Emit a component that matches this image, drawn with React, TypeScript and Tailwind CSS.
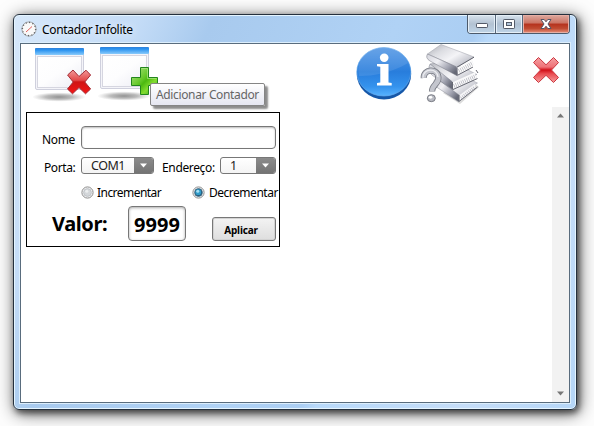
import React from "react";

function BrowserWindow({ x, y, id }: { x: number; y: number; id: string }) {
  return (
    <g>
      <defs>
        <linearGradient id={`${id}bar`} x1="0" y1="0" x2="0" y2="1">
          <stop offset="0" stopColor="#2f80da" />
          <stop offset=".3" stopColor="#2b93f0" />
          <stop offset="1" stopColor="#8acbfb" />
        </linearGradient>
        <linearGradient id={`${id}pane`} x1="0" y1="0" x2="1" y2="1">
          <stop offset="0" stopColor="#fff" />
          <stop offset=".5" stopColor="#fdfdfe" />
          <stop offset="1" stopColor="#ececf4" />
        </linearGradient>
        <radialGradient id={`${id}sh`}>
          <stop offset="0" stopColor="#7f7f7f" stopOpacity=".85" />
          <stop offset=".5" stopColor="#8f8f8f" stopOpacity=".6" />
          <stop offset="1" stopColor="#aaa" stopOpacity="0" />
        </radialGradient>
      </defs>
      <ellipse cx={x + 24} cy={y + 49} rx="27" ry="4.7" fill={`url(#${id}sh)`} />
      <rect x={x + 0.5} y={y + 0.5} width="48" height="41" rx="1.5" fill="#f4f4f9" stroke="#cfd0dd" />
      <rect x={x + 2.5} y={y + 8.5} width="44" height="31" fill={`url(#${id}pane)`} stroke="#d6d6e0" />
      <rect x={x} y={y} width="49" height="7" rx="1" fill={`url(#${id}bar)`} />
    </g>
  );
}

function DeleteWindowIcon() {
  return (
    <svg className="ml-[12px] mt-[2px] h-[58px] w-[60px] shrink-0" viewBox="33 46 60 58">
      <BrowserWindow x={35} y={48} id="del" />
      <defs>
        <linearGradient id="cross" x1="0" y1="0" x2="0" y2="1">
          <stop offset="0" stopColor="#f29a9a" />
          <stop offset=".43" stopColor="#e34a4a" />
          <stop offset=".5" stopColor="#cf1515" />
          <stop offset="1" stopColor="#f21616" />
        </linearGradient>
      </defs>
      <path d="M73 70 79 76.5 86 70.2 90.6 75 84.8 82 90.6 89 85.5 93.8 79 87.6 72.5 93.8 67.5 89 73.2 82 67.6 75Z" fill="url(#cross)" stroke="#a42b34" strokeLinejoin="round" />
    </svg>
  );
}

function AddWindowIcon() {
  return (
    <svg className="ml-[5px] mt-[2px] h-[58px] w-[62px] shrink-0" viewBox="98 46 62 58">
      <g transform="translate(0 -1)"><BrowserWindow x={100} y={48} id="add" /></g>
      <defs>
        <linearGradient id="plus" x1="0" y1="0" x2="1" y2="1">
          <stop offset="0" stopColor="#b6e68c" />
          <stop offset=".42" stopColor="#65c82a" />
          <stop offset=".52" stopColor="#4cb910" />
          <stop offset=".7" stopColor="#83dc30" />
          <stop offset="1" stopColor="#279422" />
        </linearGradient>
      </defs>
      <path d="M140.5 67.5H148.5V77.5H157.5V85.5H148.5V94.5H140.5V85.5H131.5V77.5H140.5Z" fill="url(#plus)" stroke="#23861d" strokeLinejoin="round" />
      <path d="M141.5 68.5H147.5V78.5H156.5" fill="none" stroke="#b9e99a" opacity=".6" />
    </svg>
  );
}

function InfoIcon() {
  return (
    <svg className="ml-[195px] mt-[2px] h-[56px] w-[58px] shrink-0" viewBox="355 46 58 56">
      <defs>
        <linearGradient id="info" x1="0" y1="0" x2="0" y2="1">
          <stop offset="0" stopColor="#5799e5" />
          <stop offset=".5" stopColor="#287ddc" />
          <stop offset=".8" stopColor="#3492ed" />
          <stop offset="1" stopColor="#57b2ff" />
        </linearGradient>
      </defs>
      <ellipse cx="384" cy="74" rx="27.2" ry="25.5" fill="#1557a8" />
      <ellipse cx="383.8" cy="71.8" rx="27" ry="24.2" fill="url(#info)" stroke="#65a9eb" strokeWidth=".7" />
      <path d="M359 76C374 76 391 73 408 63C403 49 391 47.5 384 47.5C367 47.5 355 60 359 76Z" fill="#fff" opacity=".1" />
      <ellipse cx="384.2" cy="57.8" rx="4.3" ry="4.2" fill="#fff" />
      <path d="M377 64H388.5V82.5L391.7 83V85.5H377V83L380.3 82.5V66.8L377 66.2Z" fill="#fff" />
    </svg>
  );
}

function BooksIcon() {
  return (
    <svg className="ml-[6px] h-[61px] w-[62px] shrink-0" viewBox="419 44 62 61">
      <defs>
        <linearGradient id="cover" x1="0" y1="0" x2="1" y2=".8">
          <stop offset="0" stopColor="#a9abb2" />
          <stop offset=".32" stopColor="#dcdde2" />
          <stop offset=".6" stopColor="#f4f4f7" />
          <stop offset="1" stopColor="#b2b4be" />
        </linearGradient>
        <linearGradient id="spine" x1="0" y1="0" x2="1" y2=".7">
          <stop offset="0" stopColor="#d4d5dc" />
          <stop offset=".4" stopColor="#f1f1f5" />
          <stop offset=".75" stopColor="#a2a4b1" />
          <stop offset="1" stopColor="#666977" />
        </linearGradient>
      </defs>
      <path d="M443 93 460 104 479 87 470 80Z" fill="#999" opacity=".35" />
      <path d="M435 77 449 70 477.5 83 459 96Z" fill="url(#cover)" stroke="#a1a3ac" strokeWidth=".5" />
      <path d="M436 78 459 95 459 102 435 86Q432 82 436 78Z" fill="url(#spine)" stroke="#858893" strokeWidth=".5" />
      <path d="M459.5 95 475.5 83.5 475 88 459.5 101Z" fill="#f6f6f8" />
      <path d="M461 98 475 87" stroke="#b3b4bd" strokeWidth="3" strokeDasharray=".7 1.3" />
      <path d="M459 101.5 477.5 87" stroke="#62646f" strokeWidth=".9" />
      <path d="M430 64 448 60 477 74.5 452 83Z" fill="url(#cover)" stroke="#999ba6" strokeWidth=".5" />
      <path d="M430 64 452 81.5 453 90 432 75Q427 70 430 64Z" fill="url(#spine)" stroke="#777a86" strokeWidth=".5" />
      <path d="M453 82 475.5 72 475 79 453 89Z" fill="#f9f9fa" />
      <path d="M454 86 476 76" stroke="#b1b2bb" strokeWidth="4" strokeDasharray=".7 1.3" />
      <path d="M453 89.5 477.5 78.5M476 70 478 73" stroke="#555762" strokeWidth=".9" />
      <path d="M427.5 54 441 44.5 474 57 457 67Z" fill="url(#cover)" stroke="#a9abb3" strokeWidth=".6" />
      <path d="M427.5 54 456.5 67 457.5 76 430 61Q425 58 427.5 54Z" fill="url(#spine)" stroke="#747782" strokeWidth=".5" />
      <path d="M457.5 68 472.5 59 472 67 458 74.5Z" fill="#fafafa" />
      <path d="M459 71 473 63" stroke="#b5b6be" strokeWidth="4" strokeDasharray=".7 1.3" />
      <path d="M457 67.2 474 57.2M458 75 473 67" stroke="#555762" strokeWidth=".9" />
      <path d="M457 68V75M452.5 82V89M459 95V101" stroke="#656772" strokeWidth="1" />
      <path d="M423.8 78C423.2 68.5 438 68 438.4 77.5C438.7 84.5 431.8 84.5 432 91.5" fill="none" stroke="#777a83" strokeWidth="6.2" />
      <path d="M423.8 78C423.2 68.5 438 68 438.4 77.5C438.7 84.5 431.8 84.5 432 91.5" fill="none" stroke="#c4c6ce" strokeWidth="4.6" />
      <path d="M423 77.5C423 68 437.5 67.5 438 77" fill="none" stroke="#ebecf0" strokeWidth="1.3" />
      <ellipse cx="431.3" cy="98.2" rx="4" ry="3.5" fill="#b9bbc3" stroke="#70737c" strokeWidth=".9" />
      <ellipse cx="430.5" cy="97.3" rx="1.8" ry="1.4" fill="#fff" />
    </svg>
  );
}

function ExitIcon() {
  return (
    <svg className="ml-[51px] mt-[12px] h-[29px] w-[29px] shrink-0" viewBox="532 56 29 29">
      <defs>
        <linearGradient id="exit" x1="0" y1="0" x2="0" y2="1">
          <stop offset="0" stopColor="#f5a1a4" />
          <stop offset=".38" stopColor="#ef7378" />
          <stop offset=".5" stopColor="#d20f18" />
          <stop offset=".65" stopColor="#e94b50" />
          <stop offset="1" stopColor="#f7a0a0" />
        </linearGradient>
      </defs>
      <path d="M538.5 57.5 546 64.8 553.5 57.5 558.5 62.5 551.5 70 558.5 77.5 553.5 82.5 546 75.3 538.5 82.5 533.5 77.5 540.5 70 533.5 62.5Z" fill="url(#exit)" stroke="#cb363f" />
    </svg>
  );
}

function Select({ value, className, textClass }: { value: string; className: string; textClass: string }) {
  return (
    <div className={`flex h-[17px] overflow-hidden rounded-[3px] border border-[#777] bg-gradient-to-b from-white to-[#f4f4f4] ${className}`}>
      <span className={`min-w-0 flex-1 text-[12.5px] leading-[16px] text-[#222] ${textClass}`}>{value}</span>
      <span className="flex w-[19px] justify-center bg-gradient-to-b from-[#8b8b8b] to-[#747474] pt-[5px]">
        <svg className="h-[5px] w-[7px]" viewBox="0 0 7 5"><path d="M0 .5H7L3.5 4.5Z" fill="#fff" /></svg>
      </span>
    </div>
  );
}

function Radio({ checked = false }: { checked?: boolean }) {
  return (
    <svg className="h-[13px] w-[13px] shrink-0" viewBox="0 0 13 13">
      <circle cx="6.5" cy="6.5" r="5.6" fill="#f6f6f6" stroke="#8c8c8c" />
      <circle cx="6.5" cy="6.5" r="3.9" fill={checked ? "#1f587a" : "#d4d7da"} stroke={checked ? "#466c84" : "#b8bbc0"} strokeWidth=".8" />
      {checked && <circle cx="6.3" cy="6.2" r="2.9" fill="#319cc9" />}
      <circle cx="5.8" cy="5.3" r="1.5" fill={checked ? "#a3def3" : "#eceeef"} />
    </svg>
  );
}

function Caption() {
  return (
    <div className="flex h-[28px] justify-between">
      <div className="flex pl-[7px] pt-[6px]">
        <svg className="h-[16px] w-[16px]" viewBox="0 0 16 16">
          <circle cx="8" cy="8" r="7.1" fill="#f9f9f9" stroke="#a2a6aa" strokeWidth="1" />
          <circle cx="8" cy="8" r="6.6" fill="none" stroke="#555" strokeWidth="1.4" strokeDasharray=".9 2.55" />
          <path d="M5 11 11 5.5" stroke="#e35f5b" />
        </svg>
        <span className="ml-[5px] whitespace-nowrap text-[12px] leading-[17px] tracking-[-0.33px] text-black [text-shadow:0_0_8px_white]">Contador Infolite</span>
      </div>
      <div className="mr-[6px] flex h-[19px] w-[103px] overflow-hidden rounded-b-[4px] border border-t-0 border-[#4c5a6b]">
        <div className="flex w-[28px] items-center justify-center border-r border-[#58697c] bg-gradient-to-b from-[#d8e3ed] via-[#b3c2d2] to-[#bfd5e8] shadow-[inset_0_0_0_1px_#e5eff7]">
          <svg className="h-[12px] w-[14px]" viewBox="0 0 14 12"><rect x="1.5" y="5.5" width="11" height="4" rx=".7" fill="#fff" stroke="#535a68" /></svg>
        </div>
        <div className="flex w-[27px] items-center justify-center border-r border-[#58697c] bg-gradient-to-b from-[#d8e3ed] via-[#aebfd1] to-[#bfd5e8] shadow-[inset_0_0_0_1px_#e5eff7]">
          <svg className="h-[12px] w-[14px]" viewBox="0 0 14 12"><rect x="1.5" y="1.5" width="11" height="9" rx=".7" fill="#fff" stroke="#535a68" /><rect x="4.5" y="4.5" width="5" height="3" fill="#b1c6db" stroke="#535a68" /></svg>
        </div>
        <div className="flex flex-1 items-center justify-center bg-[linear-gradient(#dda99f,#cb7363_45%,#b5321d_50%,#c04b32_75%,#e8927c)] shadow-[inset_0_0_0_1px_#e6afa5]">
          <svg className="h-[12px] w-[14px]" viewBox="0 0 14 12"><path d="M2 1.5H5.2L7 3.8 8.8 1.5H12L9 6 12 10.5H8.8L7 8.2 5.2 10.5H2L5 6Z" fill="#fff" stroke="#535566" strokeLinejoin="round" /></svg>
        </div>
      </div>
    </div>
  );
}

function CounterForm() {
  return (
    <section className="ml-[5px] mt-[5px] h-[135px] w-[254px] border border-black bg-white pt-[13px] text-[12px] text-black">
      <div className="flex h-[23px]">
        <label className="w-[54px] whitespace-nowrap pl-[15px] pt-[5px] leading-[17px] tracking-[-0.35px]">Nome</label>
        <div className="h-[23px] w-[195px] rounded-[4px] border border-[#777] bg-white shadow-[inset_0_1px_2px_#bbb]" />
      </div>
      <div className="mt-[8px] flex h-[17px]">
        <label className="w-[54px] whitespace-nowrap pl-[17px] pt-[2px] leading-[17px] tracking-[-0.4px]">Porta:</label>
        <Select value="COM1" className="w-[73px]" textClass="pl-[9px] tracking-[-0.5px]" />
        <label className="w-[66px] whitespace-nowrap pl-[8px] pt-[2px] leading-[17px] tracking-[-0.35px]">Endereço:</label>
        <Select value="1" className="w-[56px]" textClass="pl-[9px]" />
      </div>
      <div className="mt-[11px] flex h-[14px] items-center pl-[54px]">
        <Radio /><span className="ml-[3px] w-[95px] whitespace-nowrap leading-[17px] tracking-[-0.54px]">Incrementar</span>
        <Radio checked /><span className="ml-[4px] whitespace-nowrap leading-[17px] tracking-[-0.48px]">Decrementar</span>
      </div>
      <div className="mt-[7px] flex h-[35px]">
        <span className="w-[101px] pl-[25px] pt-[4px] text-[20px] font-bold leading-[28px] tracking-[-0.4px]">Valor:</span>
        <div className="h-[35px] w-[58px] rounded-[4px] border border-[#777] text-center text-[20px] font-bold leading-[36px] shadow-[inset_0_1px_3px_#aaa]">9999</div>
        <button className="ml-[26px] mt-[11px] h-[24px] w-[64px] rounded-[3px] border border-[#777] bg-gradient-to-b from-[#f3f3f3] to-[#dedede] pr-[6px] text-[10px] font-bold leading-[25px] tracking-[-0.2px] shadow-[inset_0_0_0_1px_#d3d3d3]">Aplicar</button>
      </div>
    </section>
  );
}

function ScrollArrow({ up = false }: { up?: boolean }) {
  return <svg className="h-[5px] w-[7px]" viewBox="0 0 7 5"><path d={up ? "M0 4.5 3.5 .5 7 4.5Z" : "M0 .5H7L3.5 4.5Z"} fill="#777" /></svg>;
}

export default function App() {
  return (
    <main className="h-[426px] w-[594px] overflow-hidden bg-[#fdfdfd] pl-[13px] pt-[14px] font-['Noto_Sans','Open_Sans',sans-serif]">
      <div className="relative h-[396px] w-[564px] rounded-[6px] border border-[#25303d] bg-[linear-gradient(115deg,#d7e8fa_0%,#c4dcf7_17%,#a8caee_27%,#b0d2f5_52%,#abcef3_63%,#b8d9fa_65%,#c5ddf8_85%,#b5d6f7_100%)] shadow-[inset_0_0_0_1px_#e5f5ff,2px_3px_6px_rgba(0,0,0,.55),2px_3px_17px_rgba(0,0,0,.65)]">
        <Caption />
        <div className="ml-[6px] flex h-[360px] w-[550px] flex-col border border-[#596c7d] bg-white shadow-[0_0_0_1px_#dceefc]">
          <div className="flex h-[63px] shrink-0 items-start">
            <DeleteWindowIcon />
            <AddWindowIcon />
            <InfoIcon />
            <BooksIcon />
            <ExitIcon />
          </div>
          <div className="flex min-h-0 flex-1 justify-between">
            <CounterForm />
            <div className="flex w-[17px] flex-col items-center justify-between bg-[#f2f2f2] py-[6px]"><ScrollArrow up /><ScrollArrow /></div>
          </div>
        </div>
        <div className="absolute left-[136px] top-[68px] h-[23px] w-[115px] whitespace-nowrap rounded-[2px] border border-[#858585] bg-gradient-to-b from-white to-[#e5e6f1] pl-[5px] text-[12px] leading-[21px] tracking-[-0.36px] text-[#666] shadow-[3px_3px_2px_rgba(0,0,0,.45)]">Adicionar Contador</div>
      </div>
    </main>
  );
}
